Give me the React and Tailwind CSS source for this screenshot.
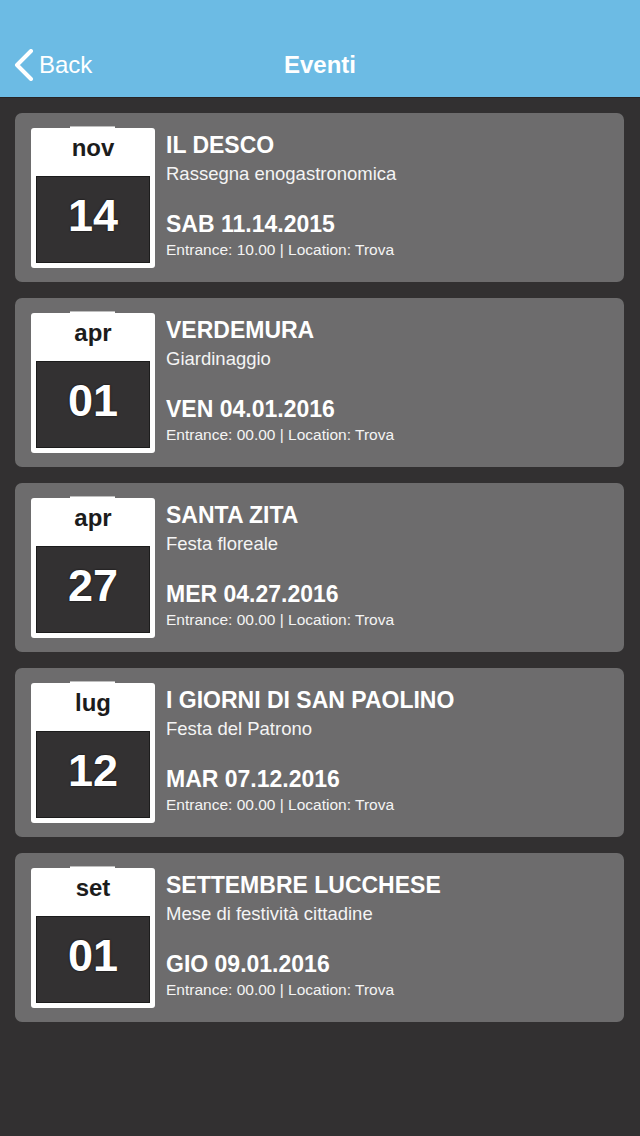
import React from "react";

const events = [
  { mon: "nov", day: "14", title: "IL DESCO", sub: "Rassegna enogastronomica", date: "SAB 11.14.2015", price: "10.00" },
  { mon: "apr", day: "01", title: "VERDEMURA", sub: "Giardinaggio", date: "VEN 04.01.2016", price: "00.00" },
  { mon: "apr", day: "27", title: "SANTA ZITA", sub: "Festa floreale", date: "MER 04.27.2016", price: "00.00" },
  { mon: "lug", day: "12", title: "I GIORNI DI SAN PAOLINO", sub: "Festa del Patrono", date: "MAR 07.12.2016", price: "00.00" },
  { mon: "set", day: "01", title: "SETTEMBRE LUCCHESE", sub: "Mese di festività cittadine", date: "GIO 09.01.2016", price: "00.00" },
];

function Calendar({ mon, day }) {
  return (
    <div className="relative w-[124px] h-[140px] shrink-0 bg-white rounded-[3px] px-[5px] pb-[5px] flex flex-col">
      <div className="absolute left-[39px] top-[-2px] w-[45px] h-[3px] bg-white border-t border-[#bdbdbd]" />
      <div className="h-[48px] text-center text-[24px] leading-[39px] font-bold text-[#1c1c1c]">{mon}</div>
      <div className="flex-1 bg-[#333132] border border-[#1c1c1c] text-center text-white font-bold text-[45px] leading-[78px] [text-shadow:0_0_2px_rgba(0,0,0,0.95)]">
        {day}
      </div>
    </div>
  );
}

function Card({ e }) {
  return (
    <div className="h-[169px] bg-[#6d6c6d] rounded-[7px] pt-[15px] pl-[16px] flex items-start gap-[11px]">
      <Calendar mon={e.mon} day={e.day} />
      <div className="pt-[4px] flex flex-col text-white">
        <div className="text-[23px] leading-[27px] font-bold">{e.title}</div>
        <div className="mt-[4px] text-[18.5px] leading-[22px] text-[#f4f4f4]">{e.sub}</div>
        <div className="mt-[26px] text-[23px] leading-[27px] font-bold">{e.date}</div>
        <div className="mt-[3px] text-[15.5px] leading-[18px] text-[#f4f4f4]">
          Entrance: {e.price} | Location: Trova
        </div>
      </div>
    </div>
  );
}

export default function App() {
  return (
    <div className="min-h-[1136px] bg-[#323031] font-[family-name:'Liberation_Sans',Arial,sans-serif]">
      <div className="h-[98px] bg-[#6cbbe4] border-b border-[#262425] pt-[51px] grid grid-cols-[1fr_auto_1fr] items-start">
        <div className="flex items-start pl-[13px] text-white">
          <svg width="22" height="32" viewBox="0 0 22 32" className="mt-[-2px]">
            <path d="M18 2 L4 16 L18 30" fill="none" stroke="white" strokeWidth="4" strokeLinecap="round" strokeLinejoin="round" />
          </svg>
          <span className="ml-[4px] text-[24px] leading-[28px]">Back</span>
        </div>
        <div className="text-white font-bold text-[24px] leading-[28px]">Eventi</div>
        <div />
      </div>
      <div className="pt-[15px] pl-[15px] pr-[16px] flex flex-col gap-[16px]">
        {events.map((e, i) => (
          <Card key={i} e={e} />
        ))}
      </div>
    </div>
  );
}
